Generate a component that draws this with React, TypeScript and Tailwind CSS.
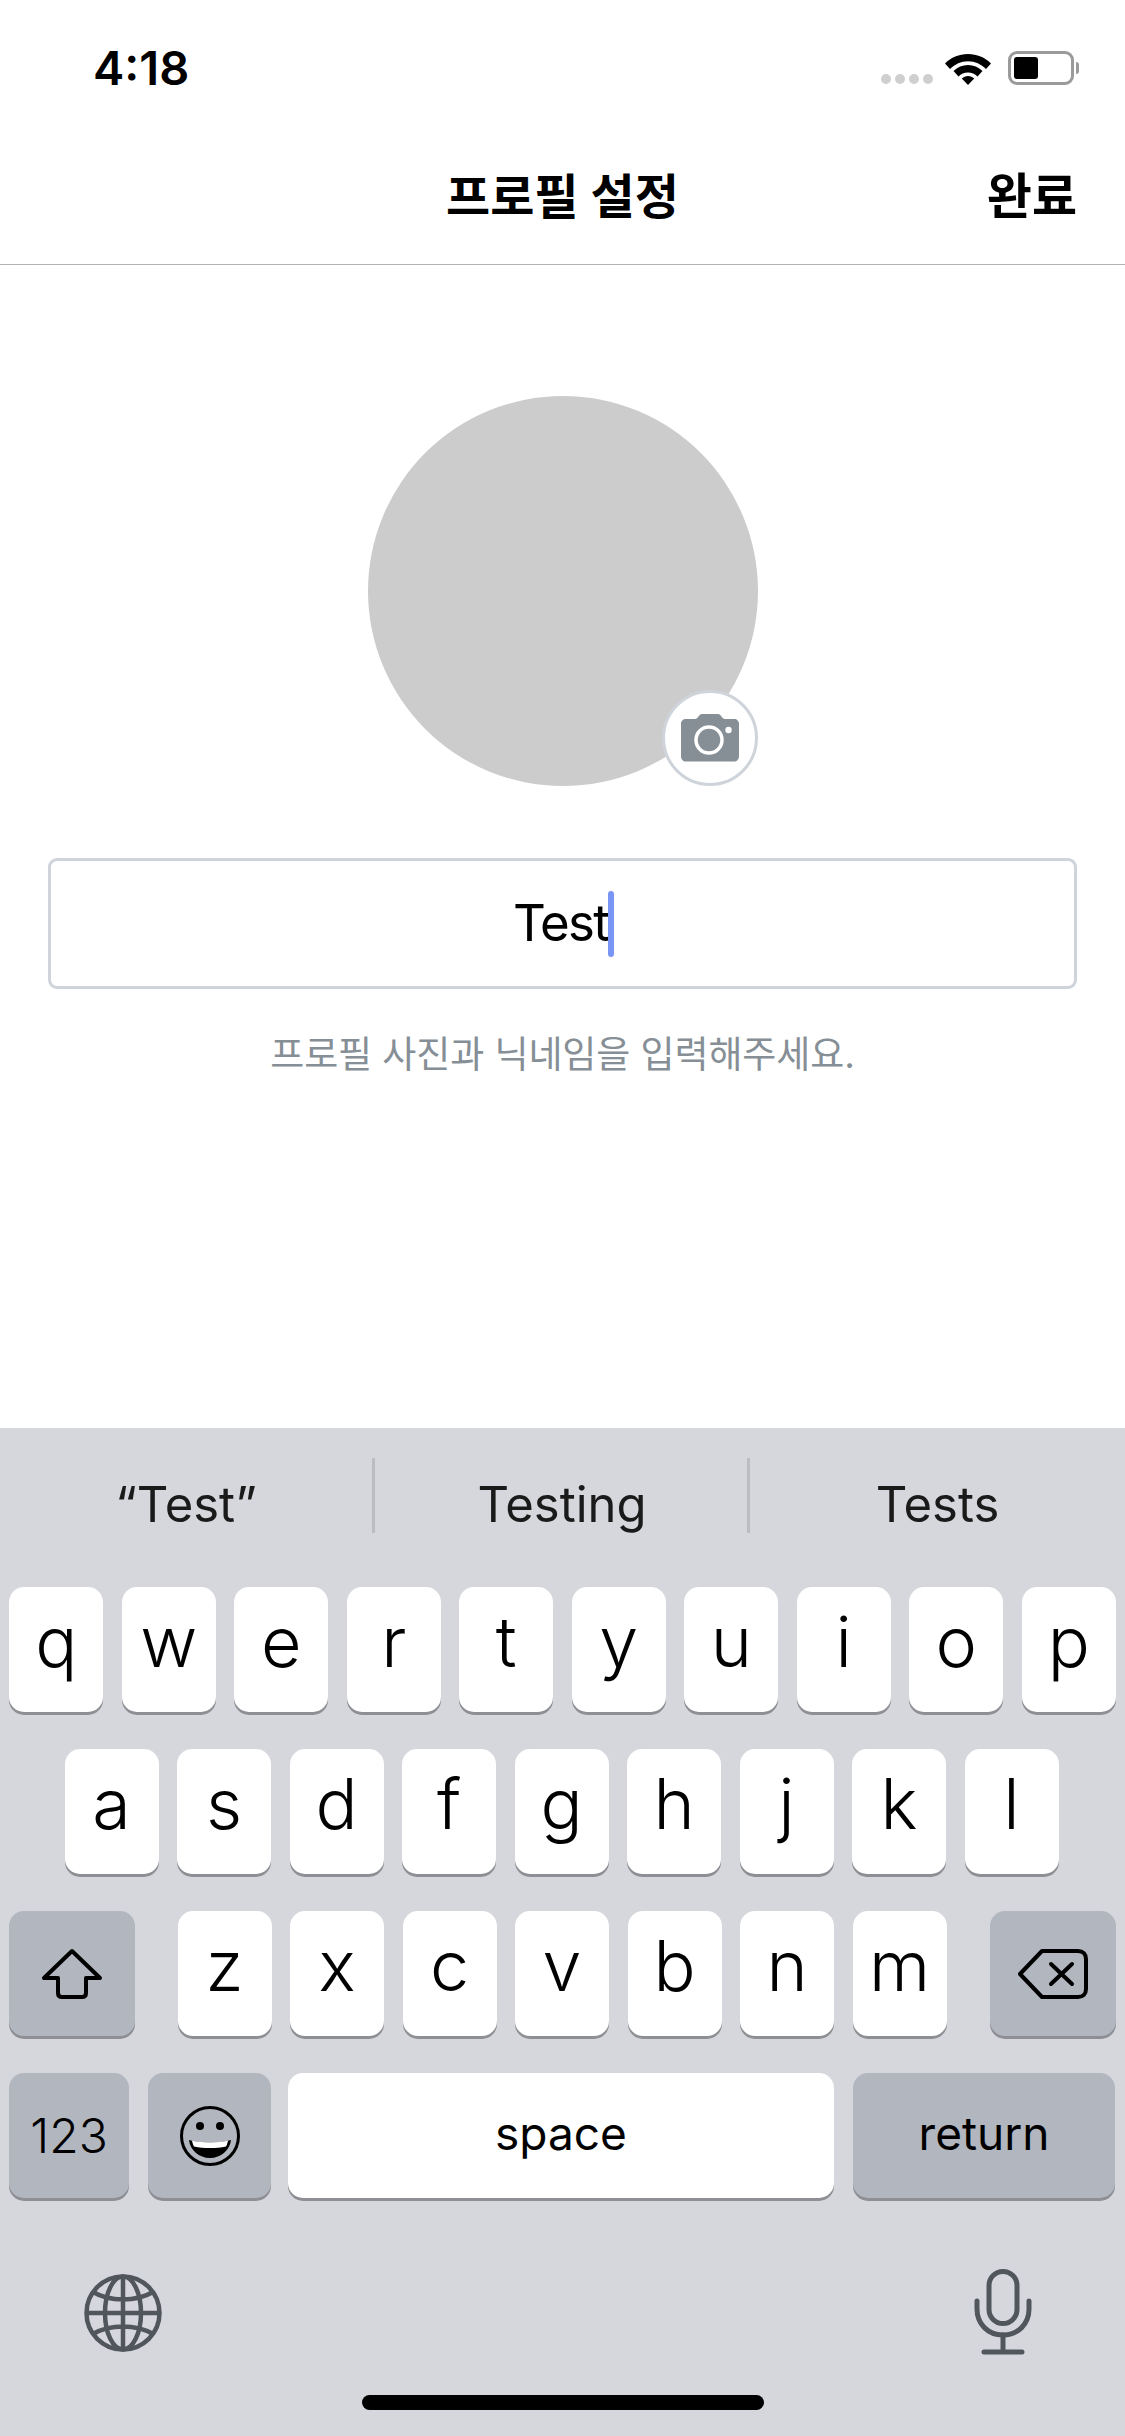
const sf = "font-['Inter','Liberation_Sans','Noto_Sans_CJK_KR',sans-serif]";

function Key({ label }: { label: string }) {
  return (
    <div className="w-[94px] h-[125px] rounded-[15px] bg-white shadow-[0_3px_0_#8e8f94] flex items-center justify-center text-[70px] font-[350] leading-none text-black pb-[16px]">
      {label}
    </div>
  );
}

function Row({ keys, cls = "" }: { keys: string[]; cls?: string }) {
  return (
    <div className={`flex justify-center gap-[18.5px] ${cls}`}>
      {keys.map((k) => (
        <Key key={k} label={k} />
      ))}
    </div>
  );
}

function Grey({ w, children }: { w: string; children: React.ReactNode }) {
  return (
    <div className={`${w} h-[125px] rounded-[15px] bg-[#b2b6bf] shadow-[0_3px_0_#8e8f94] flex items-center justify-center text-black`}>
      {children}
    </div>
  );
}

export default function App() {
  return (
    <div className={`w-[1125px] h-[2436px] bg-white flex flex-col overflow-hidden ${sf}`}>
      <div className="h-[132px] shrink-0 flex items-center justify-between pl-[93px] pr-[46px] pt-[3px]">
        <span className="text-[47px] font-semibold leading-none text-black">4:18</span>
        <div className="flex items-center gap-[11px]">
          <div className="flex gap-[4px] self-end pb-[1px] mt-[22px]">
            {[0, 1, 2, 3].map((i) => (
              <span key={i} className="w-[10px] h-[10px] rounded-full bg-[#cfcfcf]" />
            ))}
          </div>
          <svg width="48" height="34" viewBox="0 0 48 34">
            <path d="M24 3C15 3 7 6.500 1 12.500L6 18C11 13 17 10.200 24 10.200S37 13 42 18L47 12.500C41 6.500 33 3 24 3Z" fill="#000" />
            <path d="M24 14C18.500 14 13.500 16.200 9.500 20L14.500 25.500C17 23 20.300 21.600 24 21.600S31 23 33.500 25.500L38.500 20C34.500 16.200 29.500 14 24 14Z" fill="#000" />
            <path d="M24 25C21.700 25 19.500 26 17.800 27.500L24 34L30.200 27.500C28.500 26 26.300 25 24 25Z" fill="#000" />
          </svg>
          <div className="flex items-center gap-[2px] ml-[5px]">
            <div className="w-[66px] h-[34px] rounded-[9px] border-[3px] border-[#9a9a9a] p-[3px] flex">
              <div className="w-[24px] h-full rounded-[3px] bg-black" />
            </div>
            <div className="w-[3px] h-[12px] rounded-r-full bg-[#9a9a9a]" />
          </div>
        </div>
      </div>

      <div className="h-[133px] shrink-0 border-b-[1.5px] border-[#b3b3b3] flex items-center justify-between relative pr-[48px] pb-[3px]">
        <span />
        <span className="absolute left-0 right-0 text-center text-[48px] font-semibold leading-none text-black">프로필 설정</span>
        <span className="text-[49px] font-semibold leading-none text-black">완료</span>
      </div>

      <div className="flex-1 flex flex-col items-center pt-[131px]">
        <div className="w-[390px] h-[390px] rounded-full bg-[#cccccc] relative shrink-0">
          <div className="absolute right-0 bottom-0 w-[96px] h-[96px] rounded-full bg-white border-[3px] border-[#ced4da] flex items-center justify-center">
            <svg width="60" height="50" viewBox="0 0 60 50">
              <path d="M6 6H15C16.500 6 17.500 5 18.500 3.500C19.700 1.500 21 1 23 1H37C39 1 40.300 1.500 41.500 3.500C42.500 5 43.500 6 45 6H54C57 6 59 8 59 11V43C59 46.500 57 48.500 54 48.500H6C3 48.500 1 46.500 1 43V11C1 8 3 6 6 6Z" fill="#868e96" />
              <circle cx="29" cy="27" r="13" fill="none" stroke="#fff" strokeWidth="3.500" />
              <circle cx="48.500" cy="17" r="3.200" fill="#fff" />
            </svg>
          </div>
        </div>
        <div className="mt-[72px] w-[1029px] h-[131px] shrink-0 rounded-[9px] border-[3px] border-[#ced4da] flex items-center justify-center pl-[2px]">
          <span className="text-[51px] leading-none text-black tracking-[-1.8px] pb-[2px]">Test</span>
          <span className="w-[6px] h-[66px] rounded-full bg-[#7a96f5]" />
        </div>
        <div className="mt-[47px] text-[37px] leading-none text-[#868e96] tracking-[-0.1px]">프로필 사진과 닉네임을 입력해주세요.</div>
      </div>

      <div className="h-[1008px] shrink-0 bg-[#d6d7dc] flex flex-col">
        <div className="h-[159px] shrink-0 flex items-start pt-[30px]">
          <div className="w-[372px] h-[75px] flex items-center justify-center text-[49px] leading-none text-[#1a1a1a] pt-[18px]">“Test”</div>
          <div className="w-[3px] h-[75px] bg-[#bcbdc3]" />
          <div className="w-[372px] h-[75px] flex items-center justify-center text-[49px] leading-none text-[#1a1a1a] pt-[18px] pl-[2px]">Testing</div>
          <div className="w-[3px] h-[75px] bg-[#bcbdc3]" />
          <div className="flex-1 h-[75px] flex items-center justify-center text-[49px] leading-none text-[#1a1a1a] pt-[18px]">Tests</div>
        </div>
        <div className="flex flex-col gap-[37px]">
          <Row keys={["q", "w", "e", "r", "t", "y", "u", "i", "o", "p"]} />
          <Row keys={["a", "s", "d", "f", "g", "h", "j", "k", "l"]} cls="pr-[2px]" />
          <div className="flex justify-between px-[9px]">
            <Grey w="w-[126px]">
              <svg width="62" height="52" viewBox="0 0 62 52" fill="none" stroke="#000" strokeWidth="4" strokeLinejoin="round">
                <path d="M31 3L3 30H17V45C17 47.500 18.500 49 21 49H41C43.500 49 45 47.500 45 45V30H59Z" />
              </svg>
            </Grey>
            <div className="flex gap-[18.5px] pr-[1px]">
              {["z", "x", "c", "v", "b", "n", "m"].map((k) => (
                <Key key={k} label={k} />
              ))}
            </div>
            <Grey w="w-[126px]">
              <svg width="70" height="50" viewBox="0 0 70 50" fill="none" stroke="#000" strokeWidth="4" strokeLinejoin="round" strokeLinecap="round">
                <path d="M24 2H60C65 2 68 5 68 10V40C68 45 65 48 60 48H24L2 25Z" />
                <path d="M33 15L54 35M54 15L33 35" />
              </svg>
            </Grey>
          </div>
          <div className="flex px-[9px]">
            <Grey w="w-[120px]">
              <span className="text-[48px] font-[350] leading-none">123</span>
            </Grey>
            <div className="ml-[19px]">
              <Grey w="w-[123px]">
                <svg width="62" height="62" viewBox="0 0 62 62" fill="none">
                  <circle cx="31" cy="31" r="28.500" stroke="#000" strokeWidth="3" />
                  <circle cx="21" cy="21" r="4" fill="#000" />
                  <circle cx="41" cy="21" r="4" fill="#000" />
                  <path d="M10 35C23 38.500 39 38.500 52 35C51 45 42 53 31 53S11 45 10 35Z" fill="#000" />
                  <path d="M13 35.800C25 38 37 38 49 35.800C48.500 38 48 40 47 41.500C37 43.500 25 43.500 15 41.500C14 40 13.500 38 13 35.800Z" fill="#fff" />
                </svg>
              </Grey>
            </div>
            <div className="ml-[17px] w-[546px] h-[125px] rounded-[15px] bg-white shadow-[0_3px_0_#8e8f94] flex items-center justify-center text-[46px] leading-none text-black pb-[6px]">
              space
            </div>
            <div className="ml-[19px]">
              <Grey w="w-[262px]">
                <span className="text-[46px] leading-none pb-[6px]">return</span>
              </Grey>
            </div>
          </div>
        </div>
        <div className="flex-1 flex items-start justify-between relative">
          <svg className="ml-[84px] mt-[75px]" width="78" height="80" viewBox="0 0 78 80" fill="none" stroke="#51565c" strokeWidth="4.500">
            <circle cx="39" cy="40" r="36.500" />
            <ellipse cx="39" cy="40" rx="18" ry="36.500" />
            <path d="M39 3V77M2 40H76M9 19C26 29 52 29 69 19M9 61C26 51 52 51 69 61" />
          </svg>
          <svg className="mr-[93px] mt-[71px]" width="58" height="86" viewBox="0 0 58 86" fill="none" stroke="#51565c" strokeWidth="5" strokeLinecap="round">
            <rect x="15" y="2.500" width="28" height="52" rx="14" />
            <path d="M3 32V40C3 55 14 66 29 66S55 55 55 40V32" />
            <path d="M29 66V83M10 83H48" />
          </svg>
          <div className="absolute left-[362px] top-[197px] w-[402px] h-[15px] rounded-full bg-black" />
        </div>
      </div>
    </div>
  );
}
